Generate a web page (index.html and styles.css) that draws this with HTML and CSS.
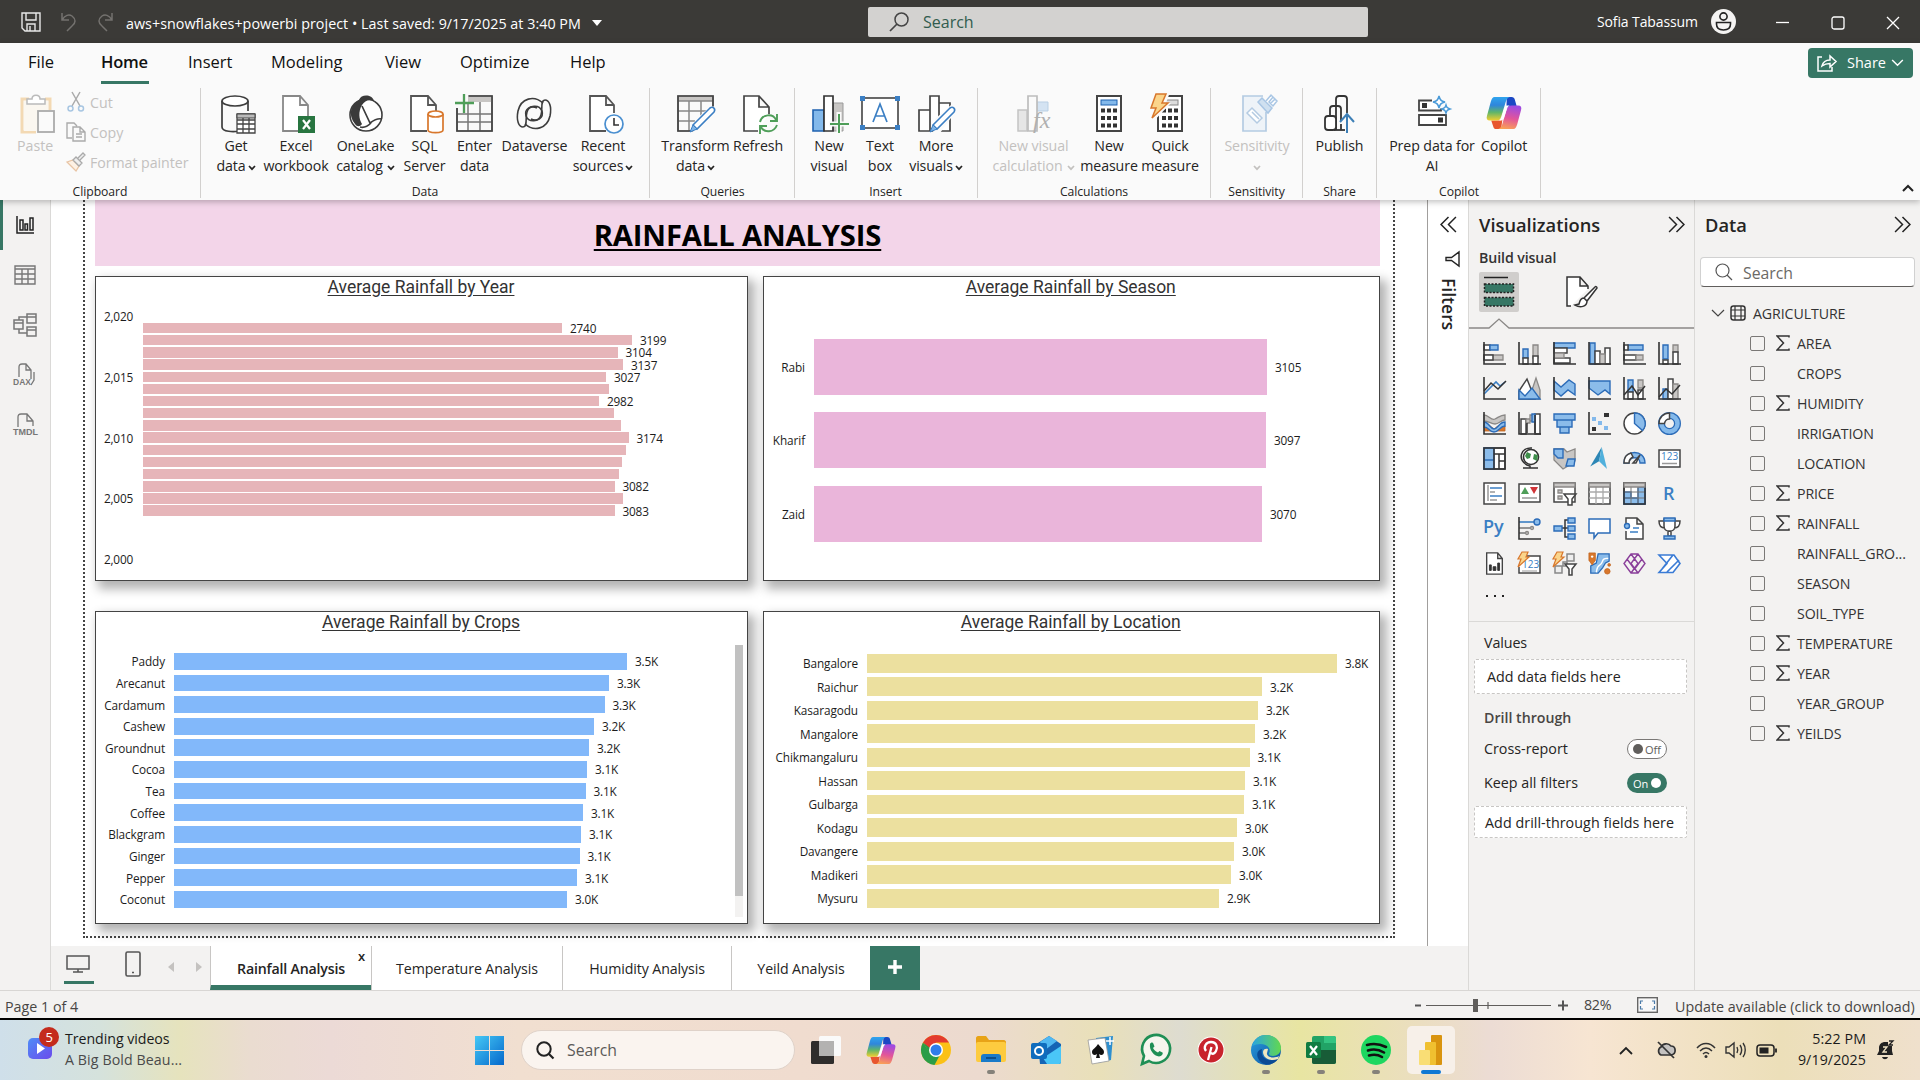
FILE: index.html
```html
<!DOCTYPE html>
<html lang="en">
<head>
<meta charset="utf-8">
<title>aws+snowflakes+powerbi project</title>
<link rel="stylesheet" href="styles.css">
</head>
<body>
<svg class="defs" width="0" height="0">
  <defs>
    <linearGradient id="cpA" x1="0" y1="0" x2="0" y2="1"><stop offset="0" stop-color="#2fa4ee"/><stop offset=".35" stop-color="#2f86dc"/><stop offset=".65" stop-color="#5fb56a"/><stop offset="1" stop-color="#f3cf2e"/></linearGradient>
    <linearGradient id="cpB" x1=".4" y1="0" x2=".2" y2="1"><stop offset="0" stop-color="#a04be0"/><stop offset=".5" stop-color="#e2559a"/><stop offset="1" stop-color="#fba552"/></linearGradient>
    <linearGradient id="win" x1="0" y1="0" x2="1" y2="1"><stop offset="0" stop-color="#45c8f5"/><stop offset="1" stop-color="#0568cc"/></linearGradient>
    <linearGradient id="edge" x1="0" y1="0" x2="1" y2="1"><stop offset="0" stop-color="#2a9fe0"/><stop offset="1" stop-color="#0c4f9e"/></linearGradient>
    <linearGradient id="edge2" x1="0" y1="0" x2="1" y2="0"><stop offset="0" stop-color="#2aa5e0"/><stop offset="1" stop-color="#62d84f"/></linearGradient>
    <linearGradient id="vid" x1="0" y1="0" x2="1" y2="1"><stop offset="0" stop-color="#4f8df7"/><stop offset="1" stop-color="#6b4bec"/></linearGradient>
    <symbol id="copilot" viewBox="0 0 38 36">
      <path d="M22 1h5c2 0 3 1 3.500 3l2 7h-7c-2 0-3 1-4 3z" fill="#1b48c4"/>
      <path d="M16 35h-5c-2 0-3-1-3.500-3l-2-6h8c2 0 3-1 4-3z" fill="#e8562f"/>
      <path d="M9 1h16c-3 1-4 4-5 8l-4 13c-1 3-2 4-5 4H4c-3 0-4-2-3-5L5 6c1-3 2-5 4-5z" fill="url(#cpA)"/>
      <path d="M29 35H13c3-1 4-4 5-8l4-13c1-3 2-4 5-4h7c3 0 4 2 3 5l-4 15c-1 3-2 5-4 5z" fill="url(#cpB)"/>
      <path d="M22 10h3c-2 1-3 3-3.500 5L19 23c-1 2-2 3-4 3h-1c2-1 2.500-3 3-5l2-7c.8-2.500 1.500-4 3-4z" fill="#fff"/>
    </symbol>
    <symbol id="sigma" viewBox="0 0 14 16"><path d="M13 2.500V1H1l6.500 7L1 15h12v-1.500" fill="none" stroke="#333" stroke-width="1.500"/></symbol>
    <symbol id="chev" viewBox="0 0 8 6"><path d="M1 1l3 3.200L7 1" fill="none" stroke="currentColor" stroke-width="1.700"/></symbol>
    <symbol id="dbl" viewBox="0 0 16 16"><path d="M1 1l7 7-7 7M8 1l7 7-7 7" fill="none" stroke="#222" stroke-width="1.400"/></symbol>
  </defs>
</svg>

<div class="app">
  <header class="titlebar">
    <svg class="save" viewBox="0 0 20 20" width="20" height="20"><path d="M1 1h18v18H4l-3-3zM5 1v7h10V1M6 19v-7h8v7M9 14v5" fill="none" stroke="#e8e8e8" stroke-width="1.400"/></svg>
    <svg class="undo" viewBox="0 0 18 20" width="18" height="20"><path d="M2 1v7h7M2 8c3-5 7-6 10-4 4 3 4 7 0 10l-5 5" fill="none" stroke="#74726f" stroke-width="1.500"/></svg>
    <svg class="redo" viewBox="0 0 18 20" width="18" height="20"><path d="M16 1v7H9M16 8c-3-5-7-6-10-4-4 3-4 7 0 10l5 5" fill="none" stroke="#74726f" stroke-width="1.500"/></svg>
    <span class="filename">aws+snowflakes+powerbi project • Last saved: 9/17/2025 at 3:40 PM</span>
    <svg class="fcaret" viewBox="0 0 10 6" width="10" height="6"><path d="M0 0h10L5 6z" fill="#fff"/></svg>
    <div class="topsearch">
      <svg viewBox="0 0 20 20" width="20" height="20"><circle cx="12.500" cy="7.500" r="6.500" fill="none" stroke="#444" stroke-width="1.500"/><path d="M8 12l-7 7" stroke="#444" stroke-width="1.700"/></svg>
      <span>Search</span>
    </div>
    <span class="user">Sofia Tabassum</span>
    <svg class="avatar" viewBox="0 0 25 25" width="25" height="25"><circle cx="12.500" cy="12.500" r="12.500" fill="#f4f3f2"/><circle cx="12.500" cy="7.500" r="3.600" fill="none" stroke="#222" stroke-width="1.600"/><path d="M5.500 13.500h14v1.500c0 4-3 6-7 6s-7-2-7-6z" fill="none" stroke="#222" stroke-width="1.600"/></svg>
    <svg class="wmin" viewBox="0 0 14 14" width="14" height="14"><path d="M0 6.500h13" stroke="#fff" stroke-width="1.300"/></svg>
    <svg class="wmax" viewBox="0 0 14 14" width="14" height="14"><rect x="1" y="1" width="12" height="12" rx="2" fill="none" stroke="#fff" stroke-width="1.300"/></svg>
    <svg class="wcls" viewBox="0 0 14 14" width="14" height="14"><path d="M1 1l12 12M13 1L1 13" stroke="#fff" stroke-width="1.300"/></svg>
  </header>

  <section class="ribbon">
    <nav class="menu">
      <a class="m1">File</a><a class="m2 on">Home</a><a class="m3">Insert</a><a class="m4">Modeling</a><a class="m5">View</a><a class="m6">Optimize</a><a class="m7">Help</a>
      <button class="share"><svg viewBox="0 0 20 18" width="20" height="18"><path d="M5 3H1v14h14v-4M5 12c1-4 4-6 8-6V2l6 5.500-6 5.500V9.500c-4 0-6 1-8 2.500z" fill="none" stroke="#fff" stroke-width="1.500"/></svg><span>Share</span><svg viewBox="0 0 14 9" width="13" height="8"><path d="M1 1l6 6 6-6" fill="none" stroke="#fff" stroke-width="1.600"/></svg></button>
    </nav>
    <div class="groups">
      <div class="group g1">
        <div class="clip">
          <div class="paste dim"><svg viewBox="0 0 36 40" width="36" height="40"><path d="M9 5H2v33h14M25 5h5v11" fill="none" stroke="#f3d9b3" stroke-width="3"/><rect x="4" y="7" width="24" height="30" fill="#fbf7f0"/><path d="M7 10V5h5c0-5 8-5 8 0h5v5z" fill="#fff" stroke="#bbb" stroke-width="1.500"/><rect x="18" y="17" width="16" height="21" fill="#fafafa" stroke="#aaa" stroke-width="1.800"/></svg><span>Paste</span></div>
          <div class="clipcol dim">
            <div><svg viewBox="0 0 20 20" width="20" height="20"><path d="M6 0l8 14M14 0L6 14" stroke="#aaa" stroke-width="1.500"/><circle cx="4.500" cy="16.500" r="2.500" fill="none" stroke="#a8c6e2" stroke-width="1.500"/><circle cx="15" cy="16.500" r="2.500" fill="none" stroke="#a8c6e2" stroke-width="1.500"/></svg><span>Cut</span></div>
            <div><svg viewBox="0 0 20 20" width="20" height="20"><path d="M6 16H1V1h7l3 3M7 5h7l5 5v9H7zM14 5v5h5M10 12h6M10 15h6" fill="none" stroke="#aaa" stroke-width="1.400"/></svg><span>Copy</span></div>
            <div><svg viewBox="0 0 20 20" width="20" height="20"><path d="M1 10l6-2 6 6-3 5z" fill="#fdf1e4" stroke="#e8c4a4" stroke-width="1.300"/><path d="M7 8l3-3 6 6-3 3zM12 6l5-5 2 2-5 5" fill="#eee" stroke="#aaa" stroke-width="1.300"/></svg><span class="fp">Format painter</span></div>
          </div>
        </div>
        <div class="glabel">Clipboard</div>
      </div>

      <div class="group g2">
        <div class="btns">
          <div class="btn" style="width:50px"><svg class="ic s3" viewBox="0 0 40 40"><path d="M3 7v26c0 5 12 5 17 4M29 7v10" fill="none" stroke="#3d3d3d" stroke-width="1.700"/><ellipse cx="16" cy="7" rx="13" ry="5" fill="#fff" stroke="#3d3d3d" stroke-width="1.700"/><path d="M18 20h18v19H18zM18 26h18M18 30h18M18 35h18M24 23v16M30 23v16" fill="#fff" stroke="#444" stroke-width="1.300"/><path d="M18 20h18v4H18z" fill="#bbb" stroke="#444"/></svg><span>Get</span><span>data<svg class="cv"><use href="#chev"/></svg></span></div>
          <div class="btn" style="width:70px"><svg class="ic s3" viewBox="0 0 40 40"><path d="M20 37H4V2h17l8 9v11M21 2v9h8" fill="#fff" stroke="#888" stroke-width="1.800"/><rect x="19" y="22" width="17" height="17" fill="#287540"/><path d="M24 26l7 9M31 26l-7 9" stroke="#fff" stroke-width="2.200"/></svg><span>Excel</span><span>workbook</span></div>
          <div class="btn" style="width:69px"><svg class="ic" viewBox="0 0 40 40"><circle cx="20" cy="21" r="16" fill="#fff" stroke="#3d3d3d" stroke-width="1.600"/><path d="M13 6c2-6 13-6 15 1-6-2-9 0-12 4-4 7-3 14 0 19-2 3-5 3-7 0-7-9-5-18 4-24z" fill="#3a3a3a"/><path d="M16 12l8 17c4-3 8-5 12-4M14 33c4 1 8-1 11-4" fill="none" stroke="#3d3d3d" stroke-width="1.700"/></svg><span>OneLake</span><span>catalog<svg class="cv wide"><use href="#chev"/></svg></span></div>
          <div class="btn" style="width:49px"><svg class="ic s2" viewBox="0 0 40 40"><path d="M20 37H4V2h17l8 9v6M21 2v9h8" fill="#fff" stroke="#555" stroke-width="1.800"/><path d="M21 20v16c0 3.500 15 3.500 15 0V20" fill="#fff" stroke="#d8772c" stroke-width="1.700"/><ellipse cx="28.500" cy="20" rx="7.500" ry="3" fill="#fff" stroke="#d8772c" stroke-width="1.700"/></svg><span>SQL</span><span>Server</span></div>
          <div class="btn" style="width:51px"><svg class="ic sm" viewBox="0 0 40 40"><path d="M3 14v23h35V2H14M3 20h35M3 28h35M14 10v27M26 6v31" fill="none" stroke="#777" stroke-width="1.500"/><path d="M14 3h24v5H14z" fill="#c8c6c4"/><path d="M3 14v23h35V2H15" fill="none" stroke="#444" stroke-width="1.700"/><path d="M10 0v19M1 9h19" stroke="#4f9e59" stroke-width="2.300"/></svg><span>Enter</span><span>data</span></div>
          <div class="btn" style="width:69px"><svg class="ic sm" viewBox="0 0 40 40"><path id="swirl" d="M29 9C20 1 7 4 4 17 2 27 5 33 9 33c5 0 2-9 4-15 2-7 12-8 15-1 2 7-5 11-11 8" fill="none" stroke="#3d3d3d" stroke-width="1.600"/><use href="#swirl" transform="rotate(180 20 19.500)"/></svg><span>Dataverse</span></div>
          <div class="btn" style="width:68px"><svg class="ic s3" viewBox="0 0 40 40"><path d="M20 37H4V2h16l8 9v8M20 2v9h8" fill="#fff" stroke="#555" stroke-width="1.800"/><circle cx="28" cy="30" r="9" fill="#fff" stroke="#4a8fd0" stroke-width="1.700"/><path d="M28 24v7h5" fill="none" stroke="#333" stroke-width="1.600"/></svg><span>Recent</span><span>sources<svg class="cv"><use href="#chev"/></svg></span></div>
        </div>
        <div class="glabel">Data</div>
      </div>

      <div class="group g3">
        <div class="btns">
          <div class="btn" style="width:69px"><svg class="ic s1" viewBox="0 0 40 40"><path d="M1 2h35v5H1z" fill="#c8c6c4"/><path d="M1 2h35v35H1zM1 7h35M1 17h35M1 27h35M12 7v30M24 7v30" fill="none" stroke="#888" stroke-width="1.500"/><path d="M14 37H1V2h35v10" fill="none" stroke="#444" stroke-width="1.700"/><path d="M18 26l16-14 5 5v22H16z" fill="#fafafa"/><path d="M16 31l17-17c3-2 6 1 4 4L20 35z" fill="#fff" stroke="#3b7fc4" stroke-width="1.600"/><path d="M16 31l4 4-7 3z" fill="#7eb4e8" stroke="#3b7fc4"/></svg><span>Transform</span><span>data<svg class="cv"><use href="#chev"/></svg></span></div>
          <div class="btn" style="width:56px"><svg class="ic s2" viewBox="0 0 40 40"><path d="M18 37H4V2h15l10 11v7M19 2v11h10" fill="#fff" stroke="#444" stroke-width="1.700"/><path d="M20 28c2-8 13-9 16-2M37 20v7h-7M37 31c-3 8-13 8-16 2M20 40v-8h7" fill="none" stroke="#4f9e59" stroke-width="1.900"/></svg><span>Refresh</span></div>
        </div>
        <div class="glabel">Queries</div>
      </div>

      <div class="group g4">
        <div class="btns">
          <div class="btn" style="width:50px"><svg class="ic s2" viewBox="0 0 40 40"><path d="M2 16h11v21H2z" fill="#83b9eb" stroke="#1f62b0" stroke-width="1.600"/><path d="M22 9h10v28H22z" fill="#c8c6c4" stroke="#999"/><path d="M13 2h9v35h-9z" fill="#fff" stroke="#333" stroke-width="1.700"/><path d="M28 18v22M18 30h20" stroke="#fafafa" stroke-width="5"/><path d="M28 20v19M19 30h19" stroke="#4f9e59" stroke-width="2"/></svg><span>New</span><span>visual</span></div>
          <div class="btn" style="width:52px"><svg class="ic" viewBox="0 0 40 40"><rect x="2" y="4" width="36" height="30" fill="#fff" stroke="#444" stroke-width="1.600"/><path d="M0 2h5v5H0zM35 2h5v5h-5zM0 31h5v5H0zM35 31h5v5h-5z" fill="#3b7fc4"/><path d="M13 28l7-18 7 18M15.500 22h9" fill="none" stroke="#3b7fc4" stroke-width="1.700"/></svg><span>Text</span><span>box</span></div>
          <div class="btn" style="width:60px"><svg class="ic s1" viewBox="0 0 40 40"><path d="M2 16h11v21H2zM22 9h11v28H22zM13 2h9v35h-9z" fill="#fff" stroke="#444" stroke-width="1.700"/><path d="M18 25l16-14 5 6-16 22h-7z" fill="#fafafa"/><path d="M16 31l17-17c3-2 6 1 4 4L20 35z" fill="#fff" stroke="#3b7fc4" stroke-width="1.600"/><path d="M16 31l4 4-7 3z" fill="#7eb4e8" stroke="#3b7fc4"/></svg><span>More</span><span>visuals<svg class="cv"><use href="#chev"/></svg></span></div>
        </div>
        <div class="glabel">Insert</div>
      </div>

      <div class="group g5">
        <div class="btns">
          <div class="btn dim" style="width:91px"><svg class="ic" viewBox="0 0 40 40"><path d="M4 16h9v21H4z" fill="#e6e6e6" stroke="#c4c4c4" stroke-width="1.500"/><path d="M23 8h11v9H23z" fill="#d4e3f2" stroke="#b9cfe4"/><path d="M14 2h9v35h-9z" fill="#fafafa" stroke="#bdbdbd" stroke-width="1.700"/><text x="19" y="34" class="fx">fx</text></svg><span>New visual</span><span>calculation<svg class="cv wide"><use href="#chev"/></svg></span></div>
          <div class="btn" style="width:60px"><svg class="ic" viewBox="0 0 40 40"><rect x="8" y="2" width="24" height="35" fill="#fff" stroke="#444" stroke-width="2"/><rect x="12" y="6" width="16" height="5" fill="#83b9eb" stroke="#1f62b0"/><path d="M12 16.500h16M12 24h16M12 31.500h16" stroke="#333" stroke-width="4" stroke-dasharray="4 2"/></svg><span>New</span><span>measure</span></div>
          <div class="btn" style="width:62px"><svg class="ic" viewBox="0 0 40 40"><rect x="8" y="2" width="24" height="35" fill="#fff" stroke="#444" stroke-width="2"/><rect x="12" y="6" width="16" height="5" fill="#ddd" stroke="#888"/><path d="M12 16.500h16M12 24h16M12 31.500h16" stroke="#333" stroke-width="4" stroke-dasharray="4 2"/><path d="M5-2h15l-4 11h5L0 31l5-14H-1z" fill="#fafafa"/><path d="M6 0h10l-4 9h6L2 24l4-10H1z" fill="#fbd58b" stroke="#d8772c" stroke-width="1.500"/></svg><span>Quick</span><span>measure</span></div>
        </div>
        <div class="glabel">Calculations</div>
      </div>

      <div class="group g6">
        <div class="btns">
          <div class="btn dim" style="width:92px"><svg class="ic s2" viewBox="0 0 40 40"><path d="M27 18v19H4V2h20" fill="#eef3f8" stroke="#b4cbe2" stroke-width="1.700"/><path d="M8 19l5-5 10 10-5 5zM13 18l7 7" fill="#fff" stroke="#b4cbe2" stroke-width="1.500"/><path d="M19 8l4-4 10 10-4 5z" fill="#cfe0f0" stroke="#a9c6e4" stroke-width="1.500"/><path d="M27 7l5-6 4 4-5 5M34 3l4 4-4 5-4-4z" fill="#fff" stroke="#a9c6e4" stroke-width="1.500"/></svg><span>Sensitivity</span><span><svg class="cv alone"><use href="#chev"/></svg></span></div>
        </div>
        <div class="glabel">Sensitivity</div>
      </div>

      <div class="group g7">
        <div class="btns">
          <div class="btn" style="width:73px"><svg class="ic s2" viewBox="0 0 40 40"><path d="M14 36V5c0-2 1-3 3-3h5c2 0 3 1 3 3v14" fill="none" stroke="#333" stroke-width="1.800"/><path d="M14 12h-3c-2 0-3 1-3 3v7M14 12h2c2 0 3 1 3 3v12M19 30v6" fill="none" stroke="#333" stroke-width="1.800"/><rect x="3" y="22" width="11" height="14" rx="3" fill="#fff" stroke="#333" stroke-width="1.800"/><path d="M12 36h11" stroke="#333" stroke-width="1.800"/><path d="M25 39V20M18 28l7-8 7 8" fill="none" stroke="#3d7fb6" stroke-width="2"/></svg><span>Publish</span></div>
        </div>
        <div class="glabel">Share</div>
      </div>

      <div class="group g8">
        <div class="btns">
          <div class="btn" style="width:88px"><svg class="ic s1" viewBox="0 0 40 40"><path d="M19 6.500H6v10h22v-2M6 21h27v10H6z" fill="#fff" stroke="#444" stroke-width="1.800"/><path d="M9 9h5v5H9zM25 23.500h5v5h-5z" fill="#333"/><path d="M26 2c1 4 2 5 6 6-4 1-5 2-6 6-1-4-2-5-6-6 4-1 5-2 6-6zM33 11c.8 2.500 1 3 4 4-3 1-3.200 1.500-4 4-.8-2.500-1-3-4-4 3-1 3.200-1.500 4-4z" fill="#fff" stroke="#4a9ad8" stroke-width="1.500"/></svg><span>Prep data for</span><span>AI</span></div>
          <div class="btn" style="width:56px"><svg class="ic"><use href="#copilot" x="1" y="2" width="38" height="34"/></svg><span>Copilot</span></div>
        </div>
        <div class="glabel">Copilot</div>
      </div>
      <svg class="collapse" viewBox="0 0 12 8" width="12" height="8"><path d="M1 7l5-5 5 5" fill="none" stroke="#222" stroke-width="2"/></svg>
    </div>
  </section>

  <main class="work">
    <aside class="rail">
      <div class="ri on"><svg viewBox="0 0 20 20" width="20" height="20"><path d="M2 1v17h17M5 5h3v10H5zM10 9h2.500v6H10zM15 3h3v12h-3z" fill="none" stroke="#222" stroke-width="1.500"/></svg></div>
      <div class="ri"><svg viewBox="0 0 22 20" width="22" height="20"><path d="M1 1h20v18H1zM1 4h20M1 9h20M1 14h20M8 4v15M14 4v15" fill="none" stroke="#777" stroke-width="1.400"/></svg></div>
      <div class="ri"><svg viewBox="0 0 24 24" width="24" height="24"><path d="M1 7h9v9H1zM1 10h9M14 1h9v9h-9zM14 4h9M14 14h9v9h-9zM14 17h9M6 7V4h8M6 16v4h8" fill="none" stroke="#777" stroke-width="1.500"/></svg></div>
      <div class="ri"><svg viewBox="0 0 24 24" width="24" height="24"><path d="M6 14V4c0-2 1-3 3-3h4l5 6v9M13 1v6h5M21 9v8l-3 5" fill="none" stroke="#777" stroke-width="1.300"/><text x="0" y="22" class="mini">DAX</text></svg></div>
      <div class="ri"><svg viewBox="0 0 24 24" width="24" height="24"><path d="M5 14V4c0-2 1-3 3-3h6l6 7v5M14 1v7h6" fill="none" stroke="#777" stroke-width="1.300"/><text x="0" y="22" class="mini t">TMDL</text></svg></div>
    </aside>

    <div class="center">
      <div class="stage">
        <div class="canvas">
          <div class="page">
            <div class="banner"><h1>RAINFALL ANALYSIS</h1></div>
            <div class="cards">
              <section class="card year">
                <h2>Average Rainfall by Year</h2>
                <div class="plot">
                  <div class="axis"><span>2,020</span><span>2,015</span><span>2,010</span><span>2,005</span><span>2,000</span></div>
                  <div class="bars">
                    <div><i style="width:419.5px"></i>2740</div><div><i style="width:489.5px"></i>3199</div><div><i style="width:475px"></i>3104</div><div><i style="width:480.5px"></i>3137</div><div><i style="width:463.5px"></i>3027</div><div><i style="width:466px"></i></div><div><i style="width:456.5px"></i>2982</div><div><i style="width:471.5px"></i></div><div><i style="width:478px"></i></div><div><i style="width:486px"></i>3174</div><div><i style="width:483.5px"></i></div><div><i style="width:479px"></i></div><div><i style="width:476px"></i></div><div><i style="width:472px"></i>3082</div><div><i style="width:480.5px"></i></div><div><i style="width:472px"></i>3083</div>
                  </div>
                </div>
              </section>
              <section class="card season">
                <h2>Average Rainfall by Season</h2>
                <div class="rows">
                  <div><b>Rabi</b><i style="width:453px"></i><em>3105</em></div>
                  <div><b>Kharif</b><i style="width:452px"></i><em>3097</em></div>
                  <div><b>Zaid</b><i style="width:448px"></i><em>3070</em></div>
                </div>
              </section>
              <section class="card crops">
                <h2>Average Rainfall by Crops</h2>
                <div class="rows">
                  <div><b>Paddy</b><i style="width:453px"></i><em>3.5K</em></div>
                  <div><b>Arecanut</b><i style="width:435px"></i><em>3.3K</em></div>
                  <div><b>Cardamum</b><i style="width:430.5px"></i><em>3.3K</em></div>
                  <div><b>Cashew</b><i style="width:420px"></i><em>3.2K</em></div>
                  <div><b>Groundnut</b><i style="width:415px"></i><em>3.2K</em></div>
                  <div><b>Cocoa</b><i style="width:413px"></i><em>3.1K</em></div>
                  <div><b>Tea</b><i style="width:411.5px"></i><em>3.1K</em></div>
                  <div><b>Coffee</b><i style="width:409px"></i><em>3.1K</em></div>
                  <div><b>Blackgram</b><i style="width:407px"></i><em>3.1K</em></div>
                  <div><b>Ginger</b><i style="width:405.5px"></i><em>3.1K</em></div>
                  <div><b>Pepper</b><i style="width:403px"></i><em>3.1K</em></div>
                  <div><b>Coconut</b><i style="width:393px"></i><em>3.0K</em></div>
                </div>
                <div class="scroll"><div></div></div>
              </section>
              <section class="card location">
                <h2>Average Rainfall by Location</h2>
                <div class="rows">
                  <div><b>Bangalore</b><i style="width:470px"></i><em>3.8K</em></div>
                  <div><b>Raichur</b><i style="width:395px"></i><em>3.2K</em></div>
                  <div><b>Kasaragodu</b><i style="width:391px"></i><em>3.2K</em></div>
                  <div><b>Mangalore</b><i style="width:388px"></i><em>3.2K</em></div>
                  <div><b>Chikmangaluru</b><i style="width:382.5px"></i><em>3.1K</em></div>
                  <div><b>Hassan</b><i style="width:378px"></i><em>3.1K</em></div>
                  <div><b>Gulbarga</b><i style="width:377px"></i><em>3.1K</em></div>
                  <div><b>Kodagu</b><i style="width:370px"></i><em>3.0K</em></div>
                  <div><b>Davangere</b><i style="width:367px"></i><em>3.0K</em></div>
                  <div><b>Madikeri</b><i style="width:364px"></i><em>3.0K</em></div>
                  <div><b>Mysuru</b><i style="width:352px"></i><em>2.9K</em></div>
                </div>
              </section>
            </div>
          </div>
        </div>
        <aside class="filters">
          <svg class="flip" width="17" height="17"><use href="#dbl"/></svg>
          <svg class="funnel" viewBox="0 0 16 16" width="16" height="16"><path d="M15 1v14L7.500 9.500H2v-3h5.500z" fill="none" stroke="#222" stroke-width="1.400"/></svg>
          <span>Filters</span>
        </aside>
      </div>
      <div class="tabs">
        <div class="views">
          <div class="dev"><svg viewBox="0 0 24 18" width="24" height="18"><path d="M1 1h22v13H1zM12 14v3M7 17h10" fill="none" stroke="#555" stroke-width="1.500"/></svg></div>
          <svg class="phone" viewBox="0 0 16 26" width="16" height="26"><rect x="1" y="1" width="14" height="24" rx="1.500" fill="none" stroke="#555" stroke-width="1.600"/><path d="M7 21.500h2" stroke="#555" stroke-width="1.500"/></svg>
          <svg class="pl" viewBox="0 0 6 10" width="6" height="10"><path d="M6 0v10L0 5z" fill="#c4c2c0"/></svg>
          <svg class="pr" viewBox="0 0 6 10" width="6" height="10"><path d="M0 0v10l6-5z" fill="#c4c2c0"/></svg>
        </div>
        <div class="tab on" style="width:161px"><span>Rainfall Analysis</span><small>x</small></div>
        <div class="tab" style="width:191px"><span>Temperature Analysis</span></div>
        <div class="tab" style="width:169px"><span>Humidity Analysis</span></div>
        <div class="tab" style="width:139px"><span>Yeild Analysis</span></div>
        <div class="add"><svg viewBox="0 0 14 14" width="14" height="14"><path d="M7 0v14M0 7h14" stroke="#fff" stroke-width="3.400"/></svg></div>
      </div>
    </div>

    <aside class="viz">
      <header><h3>Visualizations</h3><svg width="17" height="17"><use href="#dbl"/></svg></header>
      <h4>Build visual</h4>
      <div class="modes">
        <div class="mode on"><svg viewBox="0 0 40 40" width="40" height="40"><path d="M5 5.500h24" stroke="#222" stroke-width="1.500"/><path d="M5.500 12h29v8.500h-29zM5.500 25.500h29V34h-29z" fill="#377765" stroke="#222" stroke-width="1.500" stroke-dasharray="2 1.500"/></svg></div>
        <div class="mode fmt"><svg viewBox="0 0 32 32" width="32" height="32"><path d="M5 30H1V1h13l8 9v3M14 1v9h8" fill="#fff" stroke="#333" stroke-width="1.500"/><path d="M29 11L18 22l3 3 10-13c0-1-1-2-2-1zM18 22c-4 0-4 3-5 6l-4 1c5 3 12 2 12-4" fill="#fff" stroke="#333" stroke-width="1.500"/></svg></div>
      </div>
      <svg class="notch" viewBox="0 0 225 11" width="225" height="11"><path d="M0 10h20l10-9 10 9h185" fill="none" stroke="#8a8886" stroke-width="1.300"/></svg>
      <div class="vgrid">
        <svg viewBox="0 0 23 23"><path class="gy" d="M1 13h19v5H1z"/><path class="wh" d="M1 13h9v5H1zM1 3h6v5H1z"/><path class="bl" d="M7 3h8v5H7z"/><path class="ax" d="M1 0v22h22"/></svg>
        <svg viewBox="0 0 23 23"><path class="gy" d="M15 3h5v13h-5z"/><path class="bl" d="M5 7h5v9H5z"/><path class="wh" d="M5 16h5v6H5zM15 14h5v8h-5z"/><path class="ax" d="M1 0v22h22"/></svg>
        <svg viewBox="0 0 23 23"><path class="bl" d="M1 1h21v5H1z"/><path class="wh" d="M1 6h13v5H1zM1 16h16v5H1z"/><path class="gy" d="M1 11h10v5H1z"/><path class="ax" d="M1 0v22h22"/></svg>
        <svg viewBox="0 0 23 23"><path class="bl" d="M2 1h5v21H2z"/><path class="wh" d="M7 9h5v13H7zM17 6h5v16h-5z"/><path class="gy" d="M12 12h5v10h-5z"/><path class="ax" d="M1 0v22h22"/></svg>
        <svg viewBox="0 0 23 23"><path class="bl" d="M5 3h15v5H5z"/><path class="wh" d="M1 3h4v5H1zM1 13h12v5H1z"/><path class="gy" d="M13 13h7v5h-7z"/><path class="ax" d="M1 0v22h22"/></svg>
        <svg viewBox="0 0 23 23"><path class="bl" d="M5 3h5v14H5z"/><path class="gy" d="M15 3h5v7h-5z"/><path class="wh" d="M5 18h5v4H5zM15 10h5v12h-5z"/><path class="ax" d="M1 0v22h22"/></svg>

        <svg viewBox="0 0 23 23"><path class="lb" d="M1 17L13 5l4 4 5-4"/><path class="ln" d="M1 14l7-8 7 6 8-8"/><path class="ax" d="M1 0v22h22"/></svg>
        <svg viewBox="0 0 23 23"><path class="gy" d="M11 22L18 1l4 12v9z"/><path class="wh" d="M1 14l8-12 8 20H1z"/><path class="bl" d="M1 13l6 6 7-8 8 11H1z"/></svg>
        <svg viewBox="0 0 23 23"><path class="bl" d="M1 4l7 6 8-7 6 4v11l-7-5-7 6-7-6z"/><path class="ax" d="M1 0v22h22"/></svg>
        <svg viewBox="0 0 23 23"><path class="bl" d="M1 4h21v13l-5-4-7 5-9-7z"/><path class="ax" d="M1 0v22h22"/></svg>
        <svg viewBox="0 0 23 23"><path class="bl" d="M5 3h5v12H5z"/><path class="gy" d="M15 3h5v8h-5z"/><path class="wh" d="M5 15h5v7H5zM15 13h5v9h-5z"/><path class="ln" d="M1 18l8-9 6 9 7-9"/><path class="ax" d="M1 0v22h22"/></svg>
        <svg viewBox="0 0 23 23"><path class="bl" d="M5 12h5v10H5z"/><path class="wh" d="M10 2h5v20h-5z"/><path class="gy" d="M15 7h5v15h-5z"/><path class="ln" d="M1 20l7-8 6 5 8-9"/><path class="ax" d="M1 0v22h22"/></svg>

        <svg viewBox="0 0 23 23"><path class="gy" d="M1 3c5 0 7 6 11 4s6-4 10-4v5c-4 0-6 4-10 4S6 9 1 9z"/><path class="or" d="M1 13h5l5 4 4-3h7v5H1z"/><path class="bl" d="M1 10c5 0 6 7 10 7s5-7 11-7v4c-5 0-6 6-11 6S6 15 1 15z"/><path class="ax" d="M1 0v22h22"/></svg>
        <svg viewBox="0 0 23 23"><path class="wh" d="M3 7h5v15H3zM17 2h5v20h-5z"/><path class="gy" d="M8 7h4v4H8zM12 3h3v6h-3z"/><path class="bl" d="M14 2h3v8h-3z"/><path class="ln" d="M9 11v10M17 3v18"/><path class="ax" d="M1 0v22h22"/></svg>
        <svg viewBox="0 0 23 23"><path class="bl" d="M1 2h21v6H1zM4 8h15v7H4zM7 15h9v6H7z"/></svg>
        <svg viewBox="0 0 23 23"><path d="M4 5h4v4H4zM10 9h4v4h-4zM16 14h4v4h-4z" fill="#83b9eb"/><path d="M16 1h5v4h-5zM4 15h4v4H4z" fill="#333"/><path class="ax" d="M1 0v22h22"/></svg>
        <svg viewBox="0 0 23 23"><circle class="wh" cx="11.500" cy="11.500" r="10.500"/><path class="bl" d="M11.500 1a10.500 10.500 0 018 17.500l-8-7z"/></svg>
        <svg viewBox="0 0 23 23"><circle cx="11.500" cy="11.500" r="8" fill="none" stroke="#2c6cb8" stroke-width="7"/><circle cx="11.500" cy="11.500" r="8" fill="none" stroke="#83b9eb" stroke-width="4.500"/><path d="M11.500 1v6a5 5 0 00-5 4.500H1A10.500 10.500 0 0111.500 1z" class="wh"/></svg>

        <svg viewBox="0 0 23 23"><path class="wh" d="M1 1h21v21H1z"/><path class="bl" d="M1 1h10v12H1zM1 13h10v9H1z"/><path class="ln" d="M11 7h11M11 1v21M16 7v15M16 14h6M1 1h21v21H1z"/></svg>
        <svg viewBox="0 0 23 23"><circle cx="13" cy="10" r="7.500" fill="#fff" stroke="#333" stroke-width="1.600"/><path d="M9 5l4 2-1 4-3 1-2-3zM16 7l4 1-1 6-4-2z" fill="#3f8f4b"/><path class="ln" d="M14 1C3 0-1 12 9 18l3 1v2M5 21h15"/></svg>
        <svg viewBox="0 0 23 23"><path class="gy" d="M1 2h10l3 3 8-3v12l-7 5-5 3-9-9z"/><path class="bl" d="M1 2h9v9H5l-4-4zM15 12h7l-1 7h-8z"/></svg>
        <svg viewBox="0 0 23 26"><path d="M14 0L1 22l10-6z" fill="#2c86b5"/><path d="M14 0l6 25-9-9z" fill="#50b0dc"/></svg>
        <svg viewBox="0 0 23 23"><path class="bl" d="M1 16C1 2 22 2 22 16h-5c0-7-11-7-11 0z"/><path class="wh" d="M1 16c0-6 3-9 7-10l2 4c-2 1-4 3-4 6zM10 16l7-8-4 8z"/></svg>
        <svg viewBox="0 0 23 23"><path class="wh" d="M1 3h21v17H1z"/><text x="3" y="13" class="num">123</text><path d="M4 16.500h15" stroke="#999" stroke-width="1.500"/></svg>

        <svg viewBox="0 0 23 23"><path class="wh" d="M1 1h21v21H1z"/><path class="lb" d="M7 6h12M7 14h12"/><path d="M5 3v16M7 10h5M7 18h7" stroke="#999" stroke-width="1.500"/></svg>
        <svg viewBox="0 0 23 23"><path class="wh" d="M1 2h21v18H1z"/><path d="M3 12l4-7 4 7z" fill="#4f9e59"/><path d="M12 5h8l-4 7z" fill="#d13438"/><path d="M4 16h15" stroke="#999" stroke-width="1.500"/></svg>
        <svg viewBox="0 0 23 23"><path class="wh" d="M1 1h21v19H1z"/><path class="gy" d="M1 1h21v4H1zM5 8h4v3H5zM5 14h4v3H5z"/><path d="M11 12h12l-4 5v6h-4v-6z" class="wh"/></svg>
        <svg viewBox="0 0 23 23"><path class="wh" d="M1 1h21v21H1z"/><path d="M1 10h21M1 16h21M8 4v18M15 4v18" stroke="#aaa" stroke-width="1.300"/><path class="gy" d="M1 1h21v4H1z"/></svg>
        <svg viewBox="0 0 23 23"><path class="wh" d="M1 1h21v21H1z"/><path class="bl" d="M1 16h14v6H1zM15 5h7v17h-7zM1 10h7v6H1z"/><path d="M1 10h21M1 16h21M8 5v17M15 5v17" stroke="#777"/><path class="ln" d="M1 1h21v21H1z"/><path class="gy" d="M1 1h21v4H1z"/></svg>
        <svg viewBox="0 0 23 23"><text x="5" y="18" class="let">R</text></svg>

        <svg viewBox="0 0 23 23"><text x="0" y="16" class="let">Py</text></svg>
        <svg viewBox="0 0 23 23"><path class="lb" d="M1 5h15"/><circle class="bl" cx="19" cy="5" r="3"/><path d="M1 11h11M1 16h6" stroke="#777" stroke-width="1.500"/><circle cx="14" cy="11" r="1.500" class="gy"/><circle cx="9" cy="16" r="1.500" class="gy"/><path class="ax" d="M1 0v22h22"/></svg>
        <svg viewBox="0 0 23 23"><path class="ln" d="M8 11h8M15 3h-3v17h3"/><path class="bl" d="M1 9h8v5H1zM15 1h7v5h-7zM15 9h7v5h-7zM15 17h7v5h-7z"/></svg>
        <svg viewBox="0 0 23 23"><path d="M1 2h21v14H10l-4 5v-5H1z" fill="#fff" stroke="#2c6cb8" stroke-width="1.500"/></svg>
        <svg viewBox="0 0 23 23"><path class="wh" d="M3 8V1h11l6 6v15H3v-8M14 1v6h6"/><circle class="bl" cx="4" cy="9" r="2.500"/><path class="lb" d="M10 11h6M7 15h8"/></svg>
        <svg viewBox="0 0 23 23"><path class="wh" d="M6 2h11v7c0 7-11 7-11 0zM6 4H1c0 5 2 7 6 7M17 4h5c0 5-2 7-6 7M10 14h3v5h-3z"/><path class="bl" d="M6 1h11v3H6zM6 19h11v3H6z"/></svg>

        <svg viewBox="0 0 23 25"><path class="wh" d="M3 1h12l5 6v17H3zM15 1v6h5"/><path d="M6 14h2v6H6zM10 16h3v4h-3zM15 12h2v8h-2z" fill="#333" stroke="#333"/></svg>
        <svg viewBox="0 0 23 23"><path class="wh" d="M9 4h13v17H1v-6"/><text x="4" y="16" class="num">123</text><path d="M4 19h15" stroke="#999"/><path class="fl" d="M4 0h6L8 5h3L0 15l3-8H0z"/></svg>
        <svg viewBox="0 0 23 23"><path d="M14 2h7v7h-7zM2 14h7v7H2zM10 10h4v4h-4z" fill="#eee" stroke="#888" stroke-width="1.500"/><path class="wh" d="M12 12h11l-4 5v6h-3v-6z"/><path class="fl" d="M4 0h6L8 5h3L0 15l3-8H0z"/></svg>
        <svg viewBox="0 0 23 25"><path class="bl" d="M10 2h12v8l-4 2-3 5-5 6H2V15l6-3z"/><path d="M21 7c-8-1-5 5-9 7-4 2-3 5-4 8" stroke="#fff" stroke-width="1.500" fill="none"/><path d="M0 1h7v8l-3.500 5L0 9z" class="or"/><circle cx="3.500" cy="5" r="1.300" fill="#fff"/><circle cx="20" cy="21" r="3" class="or"/><circle cx="22" cy="14" r="1.500" class="or"/></svg>
        <svg viewBox="0 0 23 23"><path d="M8 2h7l7 9.500L15 21H8L1 11.500zM8 2l7 9.500L8 21M15 2l-7 9.500 7 9.500M4 7l7 9.500M19 7l-7 9.500" fill="none" stroke="#8a3f9a" stroke-width="1.400"/></svg>
        <svg viewBox="0 0 23 23"><path d="M1 3h15l6 8.500-7 9H1l8-9zM9 20L21 8M4 17L15 3" fill="#fff" stroke="#3a7bd5" stroke-width="1.600"/></svg>
      </div>
      <div class="dots"><i></i><i></i><i></i></div>
      <div class="wells">
        <label>Values</label>
        <div class="well">Add data fields here</div>
        <h5>Drill through</h5>
        <div class="opt o1"><span>Cross-report</span><div class="tog off"><i></i><span>Off</span></div></div>
        <div class="opt o2"><span>Keep all filters</span><div class="tog onn"><span>On</span><i></i></div></div>
        <div class="well w2">Add drill-through fields here</div>
      </div>
    </aside>

    <aside class="data">
      <header><h3>Data</h3><svg width="17" height="17"><use href="#dbl"/></svg></header>
      <div class="dsearch"><svg viewBox="0 0 18 18" width="18" height="18"><circle cx="7.500" cy="7.500" r="6.500" fill="none" stroke="#555" stroke-width="1.200"/><path d="M12 12l5 5" stroke="#555" stroke-width="1.300"/></svg><span>Search</span></div>
      <div class="table"><svg viewBox="0 0 14 8" width="14" height="8"><path d="M1 1l6 6 6-6" fill="none" stroke="#444" stroke-width="1.200"/></svg><svg class="ti" viewBox="0 0 16 16" width="16" height="16"><rect x="1" y="1" width="14" height="14" rx="2.500" fill="none" stroke="#333" stroke-width="1.500"/><path d="M1 5h14M1 11h14M5 1v14M11 1v14" stroke="#333" stroke-width="1.200"/></svg><span>AGRICULTURE</span></div>
      <ul>
        <li><i></i><svg><use href="#sigma"/></svg>AREA</li>
        <li><i></i><svg></svg>CROPS</li>
        <li><i></i><svg><use href="#sigma"/></svg>HUMIDITY</li>
        <li><i></i><svg></svg>IRRIGATION</li>
        <li><i></i><svg></svg>LOCATION</li>
        <li><i></i><svg><use href="#sigma"/></svg>PRICE</li>
        <li><i></i><svg><use href="#sigma"/></svg>RAINFALL</li>
        <li><i></i><svg></svg>RAINFALL_GRO...</li>
        <li><i></i><svg></svg>SEASON</li>
        <li><i></i><svg></svg>SOIL_TYPE</li>
        <li><i></i><svg><use href="#sigma"/></svg>TEMPERATURE</li>
        <li><i></i><svg><use href="#sigma"/></svg>YEAR</li>
        <li><i></i><svg></svg>YEAR_GROUP</li>
        <li><i></i><svg><use href="#sigma"/></svg>YEILDS</li>
      </ul>
    </aside>
  </main>

  <footer class="status">
    <span class="pg">Page 1 of 4</span>
    <svg class="zoom" viewBox="0 0 156 16" width="156" height="16"><path d="M2 8.500h6" stroke="#555" stroke-width="2"/><path d="M13 8.500h125M75 5v7" stroke="#605e5c" stroke-width="1.200"/><path d="M60 2h5v13h-5z" fill="#605e5c"/><path d="M145 8.500h10M150 3.500v10" stroke="#555" stroke-width="2"/></svg>
    <span class="pct">82%</span>
    <svg class="fit" viewBox="0 0 21 16" width="21" height="16"><rect x=".7" y=".7" width="19.600" height="14.600" fill="#f8f8f8" stroke="#666" stroke-width="1.400"/><path d="M6 4H3.500v3M3.500 9v3H6M15 4h2.500v3M17.500 9v3H15" fill="none" stroke="#4a7aa8" stroke-width="1.200"/></svg>
    <span class="upd">Update available (click to download)</span>
  </footer>

  <div class="taskbar">
    <div class="widget">
      <svg viewBox="0 0 36 36" width="36" height="36"><rect x="4" y="11" width="24" height="21" rx="5" fill="url(#vid)"/><path d="M13 16l8 5.500-8 5.500z" fill="#fff"/><circle cx="25" cy="10" r="10" fill="#c42b1c"/><text x="21.500" y="15" class="badge">5</text></svg>
      <div><span>Trending videos</span><span class="sub">A Big Bold Beau...</span></div>
    </div>
    <div class="apps">
      <svg class="start" viewBox="0 0 29 29" width="29" height="29"><path d="M0 0h14v14H0zM15 0h14v14H15zM0 15h14v14H0zM15 15h14v14H15z" fill="url(#win)"/></svg>
      <div class="tsearch"><svg viewBox="0 0 18 18" width="18" height="18"><circle cx="8" cy="8" r="6.700" fill="none" stroke="#222" stroke-width="2"/><path d="M12.500 12.500l5 5" stroke="#222" stroke-width="2.200"/></svg><span>Search</span></div>
      <div class="app-i"><svg viewBox="0 0 30 30" width="30" height="30"><rect y="6" width="23" height="23" rx="1.500" fill="#2f2d2c"/><rect x="8" y="1" width="22" height="20" rx="1.500" fill="#fafafa"/><rect x="8" y="6" width="15" height="15" fill="#b3b2b1"/></svg></div>
      <div class="app-i"><svg width="30" height="29"><use href="#copilot"/></svg></div>
      <div class="app-i"><svg viewBox="0 0 30 30" width="30" height="30"><circle cx="15" cy="15" r="15" fill="#fbc116"/><path d="M2 7.500A15 15 0 0013.500 30l6.500-12-5 3-6-3z" fill="#2a9d48"/><path d="M2 7.500L9 19l6-4z" fill="#2a9d48"/><path d="M2 7.500A15 15 0 0128 7.500H15L9 13z" fill="#e33b2e"/><circle cx="15" cy="15" r="7" fill="#fff"/><circle cx="15" cy="15" r="5.500" fill="#2f7de9"/></svg></div>
      <div class="app-i run"><svg viewBox="0 0 30 28" width="30" height="28"><path d="M0 2c0-1 1-2 2-2h8l3 4h15c1 0 2 1 2 2v3H0z" fill="#e8a317"/><rect y="6" width="30" height="20" rx="2" fill="#fdcb3f"/><path d="M5 26v-5c0-2 1-3 3-3h14c2 0 3 1 3 3v5z" fill="#1a7ac9"/><path d="M10 22h10" stroke="#0b4f8c" stroke-width="2"/></svg></div>
      <div class="app-i"><svg viewBox="0 0 30 28" width="30" height="28"><path d="M7 7L18 0l12 8v18c0 1-1 2-2 2H9z" fill="#1564b5"/><path d="M9 6l9-6 8 5-12 9z" fill="#4fb8f2"/><path d="M30 10L12 22l4 6h12c1 0 2-1 2-2z" fill="#4ac6f8"/><rect y="7" width="16" height="16" rx="2" fill="#0f6cbd"/><circle cx="8" cy="15" r="4" fill="none" stroke="#fff" stroke-width="2"/></svg></div>
      <div class="app-i"><svg viewBox="0 0 30 28" width="30" height="28"><path d="M10 2l17-2-2 24-13 3z" fill="#2d8fd0"/><path d="M2 4l17-2 4 23-17 3z" fill="#fff" stroke="#999" stroke-width=".8"/><path d="M12 8c3 4 6 5 6 8s-3 4-5 2l1 4h-4l1-4c-2 2-5 1-5-2s4-4 6-8z" fill="#111"/><path d="M24 1v8M20 5h8" stroke="#fff" stroke-width="1.500"/></svg></div>
      <div class="app-i"><svg viewBox="0 0 30 30" width="30" height="30"><path d="M1 29l2-8a14 14 0 115 5z" fill="#f6f6ee" stroke="#1f8f55" stroke-width="2.600"/><path d="M9 9c1-2 3-2 3.500 0l1 2.500L12 13c1 2 3 4 5 4.500l1.500-1.500 3 1.500c1 1-1 4-3.500 4C13 21 8 15 9 9z" fill="#1f8f55"/></svg></div>
      <div class="app-i"><svg viewBox="0 0 28 28" width="28" height="28"><circle cx="14" cy="14" r="13.500" fill="#fff"/><circle cx="14" cy="14" r="12.500" fill="#c8232c"/><path d="M11 24l3.500-13M9 15c-3-4 0-9 5-9 6 0 7 6 5 9-2 4-5 3-6 1" fill="none" stroke="#fff" stroke-width="2.300"/></svg></div>
      <div class="app-i run"><svg viewBox="0 0 30 30" width="30" height="30"><circle cx="15" cy="15" r="15" fill="url(#edge)"/><path d="M1 11C4 3 9 0 15 0c9 0 15 6 15 13 0 5-4 8-8 8-3 0-4-1-4-3 1-1 1-3 0-5-3-5-11-5-17-2z" fill="url(#edge2)"/><path d="M11 14c-2 8 5 14 16 10-5 7-16 8-20-1-2-5 0-8 4-9z" fill="#0b4a94"/><path d="M16 18c-1 4 7 6 12 3l-1 3c-8 3-15-1-15-7 0-3 3-4 5-3z" fill="#f0e7c0"/></svg></div>
      <div class="app-i run"><svg viewBox="0 0 30 28" width="30" height="28"><rect x="6" width="24" height="28" rx="2" fill="#21a366"/><path d="M18 0h10c1 0 2 1 2 2v5H18z" fill="#33c481"/><path d="M6 14h24v12c0 1-1 2-2 2H8c-1 0-2-1-2-2z" fill="#185c37"/><path d="M18 7h12v7H18z" fill="#21a366"/><rect y="6" width="15" height="16" rx="1.500" fill="#107c41"/><path d="M4 10l7 9M11 10l-7 9" stroke="#fff" stroke-width="2.200"/></svg></div>
      <div class="app-i run"><svg viewBox="0 0 30 30" width="30" height="30"><circle cx="15" cy="15" r="15" fill="#1ed760"/><path d="M6 10c7-2 13-1 19 2M7 15.500c6-2 11-1 16 2M8 20.500c5-1.500 9-1 13 1.500" fill="none" stroke="#111" stroke-width="2.600" stroke-linecap="round"/></svg></div>
      <div class="app-i active"><svg viewBox="0 0 24 30" width="24" height="30"><rect x="12" width="11" height="30" rx="1" fill="#d9940f"/><rect x="6" y="7" width="11" height="23" rx="1" fill="#f0c030"/><rect x="0" y="15" width="11" height="15" rx="1" fill="#f9de75"/></svg></div>
    </div>
    <div class="tray">
      <svg class="t1" viewBox="0 0 14 9" width="14" height="9"><path d="M1 8l6-6 6 6" fill="none" stroke="#222" stroke-width="1.800"/></svg>
      <svg class="t2" viewBox="0 0 22 18" width="22" height="18"><path d="M6 14a4.500 4.500 0 010-8 6 6 0 0110-1c5 0 6 8 0 9z" fill="#c4c2c0" stroke="#333" stroke-width="1.700"/><path d="M3 1l16 16" stroke="#333" stroke-width="1.700"/></svg>
      <svg class="t3" viewBox="0 0 20 16" width="20" height="16"><path d="M1 6c5-6 13-6 18 0M4 9c4-4 8-4 12 0M7 12c2-2 4-2 6 0" fill="none" stroke="#333" stroke-width="1.500"/><circle cx="10" cy="14.500" r="1.500" fill="#333"/></svg>
      <svg class="t4" viewBox="0 0 22 16" width="22" height="16"><path d="M1 5h3l5-4v14l-5-4H1zM12 5c1 2 1 4 0 6M15 3c2 3 2 7 0 10M18 1c3 4 3 10 0 14" fill="none" stroke="#333" stroke-width="1.400"/></svg>
      <svg class="t5" viewBox="0 0 21 13" width="21" height="13"><rect x="1" y="1" width="17" height="11" rx="3" fill="none" stroke="#222" stroke-width="1.500"/><rect x="3.500" y="3.500" width="9" height="6" fill="#222"/><path d="M20 4.500v4" stroke="#222" stroke-width="1.800"/></svg>
      <div class="clock"><span>5:22 PM</span><span>9/19/2025</span></div>
      <svg class="t6" viewBox="0 0 18 20" width="18" height="20"><path d="M1 15l2-4V8c0-4 3-6 6-6h3v4h4v5l1 4zM6 17h6c-1 3-5 3-6 0z" fill="#222"/><path d="M7 7h4l-4 5h4" fill="none" stroke="#efe2c4" stroke-width="1.300"/><path d="M13 1h4l-4 4h4" fill="none" stroke="#222" stroke-width="1.300"/></svg>
    </div>
  </div>
</div>
</body>
</html>
```
FILE: styles.css
```css
* { box-sizing: border-box; }
body { margin: 0; width: 1920px; height: 1080px; overflow: hidden; font-family: "Open Sans", "Noto Sans", sans-serif; color: #252423; font-size: 14px; }
svg { display: block; flex: none; overflow: visible; }
h1, h2, h3, h4, h5, ul { margin: 0; padding: 0; }
i, em { font-style: normal; }
.defs { position: absolute; }
.app { display: flex; flex-direction: column; height: 1080px; }

/* title bar */
.titlebar { height: 43px; background: #3b3a37; display: flex; align-items: center; color: #fff; flex: none; white-space: nowrap; }
.save { margin-left: 21px; }
.undo { margin-left: 19px; }
.redo { margin-left: 18px; }
.filename { margin-left: 12px; width: 457px; font-size: 14.300px; letter-spacing: .03px; padding-top: 4px; }
.fcaret { margin-left: 9px; margin-top: 3px; }
.topsearch { margin-left: 266px; width: 500px; height: 30px; background: #d3d2d0; border-radius: 2px; display: flex; align-items: center; padding-left: 21px; color: #315c4e; font-size: 16px; }
.topsearch span { margin-left: 14px; }
.user { margin-left: 229px; width: 102px; font-size: 14px; letter-spacing: -.12px; }
.avatar { margin-left: 12px; }
.wmin { margin-left: 40px; margin-top: 3px; }
.wmax { margin-left: 41px; margin-top: 3px; }
.wcls { margin-left: 41px; margin-top: 3px; }

/* ribbon */
.ribbon { height: 157px; background: #fafafa; flex: none; position: relative; z-index: 2; box-shadow: 0 2px 6px rgba(0,0,0,.25); display: flex; flex-direction: column; }
.menu { height: 45px; display: flex; align-items: center; font-size: 16.500px; color: #111; }
.menu a { height: 38px; line-height: 32px; white-space: nowrap; margin-top: -2px; }
.menu .m1 { margin-left: 28px; width: 73px; }
.menu .m2 { width: 48px; margin-right: 39px; font-weight: 600; letter-spacing: -.2px; border-bottom: 3px solid #377765; }
.menu .m3 { width: 83px; }
.menu .m4 { width: 114px; }
.menu .m5 { width: 75px; }
.menu .m6 { width: 110px; }
.menu .m7 { width: 60px; }
.share { margin-left: auto; margin-right: 7px; margin-top: -6px; width: 105px; height: 30px; border: 0; border-radius: 4px; background: #377765; color: #fff; font: 14.500px "Open Sans", sans-serif; display: flex; align-items: center; padding: 0 0 0 9px; }
.share span { margin: 0 5px 0 10px; }
.groups { flex: 1; display: flex; position: relative; }
.group { height: 110px; border-right: 1px solid #d2d0ce; display: flex; flex-direction: column; flex: none; }
.g1 { width: 201px; }
.g2 { width: 449px; padding-left: 10px; }
.g3 { width: 145px; padding-left: 11px; }
.g4 { width: 183px; padding-left: 9px; }
.g5 { width: 233px; padding-left: 10px; }
.g6 { width: 92px; }
.g7 { width: 74px; }
.g8 { width: 164px; padding-left: 11px; }
.btns { display: flex; height: 94px; }
.btn { flex: none; display: flex; flex-direction: column; align-items: center; padding-top: 6px; font-size: 14.200px; color: #252423; }
.btn span { white-space: nowrap; line-height: 20px; display: flex; align-items: center; justify-content: center; height: 20px; letter-spacing: -.1px; position: relative; top: -1px; }
.ic { width: 40px; height: 40px; margin-bottom: 3px; position: relative; }
.s1 { left: 1px; } .s2 { left: 2px; } .s3 { left: 3px; } .sm { left: -1px; }
.cv { width: 8px; height: 6px; margin-left: 2px; margin-top: 3px; }
.cv.wide { margin-left: 4px; }
.cv.alone { margin-left: -1px; }
.dim, .btn.dim { color: #c3c1bf; }
.fx { font: italic 24px "Liberation Serif", serif; fill: #b0b0b0; }
.glabel { font-size: 12.200px; text-align: center; line-height: 16px; padding-top: 2px; margin-bottom: -4px; letter-spacing: -.05px; }
.g2 .glabel, .g3 .glabel, .g4 .glabel, .g5 .glabel, .g8 .glabel { margin-left: -10px; }
.clip { display: flex; height: 94px; padding-left: 17px; font-size: 14.200px; }
.paste { width: 49px; padding-top: 6px; display: flex; flex-direction: column; align-items: flex-start; padding-left: 3px; }
.paste span { line-height: 20px; margin-top: 2px; margin-left: -3px; }
.clipcol { display: flex; flex-direction: column; margin-top: -1px; }
.clipcol > div { display: flex; align-items: center; height: 30px; gap: 4px; white-space: nowrap; }
.fp { letter-spacing: -.05px; }
.collapse { position: absolute; right: 6px; bottom: 8px; }

/* workspace */
.work { height: 790px; display: flex; flex: none; background: #f3f2f1; }
.rail { width: 51px; border-right: 1px solid #dad9d7; display: flex; flex-direction: column; flex: none; }
.ri { height: 50px; display: flex; align-items: center; justify-content: center; padding-bottom: 1px; }
.ri.on { border-left: 3px solid #377765; padding-right: 3px; }
.mini { font: bold 8.500px "Liberation Sans", sans-serif; fill: #777; }
.mini.t { font-size: 9px; }
.center { width: 1417px; flex: none; display: flex; flex-direction: column; }
.stage { height: 746px; display: flex; background: #fff; }
.canvas { width: 1376px; padding: 0 0 0 32px; flex: none; }
.page { width: 1312px; height: 738px; border: 2px dotted #444; border-top: 0; padding: 0 12px 0 10px; }
.banner { height: 66px; width: 1285px; background: #f3d5e9; display: flex; justify-content: center; padding-top: 15px; }
.banner h1 { font-size: 29.200px; line-height: 40px; letter-spacing: -.15px; color: #000; text-decoration: underline; text-decoration-thickness: 2px; text-underline-offset: 3px; white-space: nowrap; }
.cards { display: grid; grid-template-columns: 653px 617.500px; grid-template-rows: 305px 313px; column-gap: 14.500px; row-gap: 30px; margin-top: 10px; }
.card { border: 1.500px solid #444; background: #fff; box-shadow: 5px 6px 10px 2px rgba(0,0,0,.3); display: grid; grid-template-rows: 24px 1fr; font-size: 11.800px; color: #1c1c1c; position: relative; }
.card h2 { font: 400 17.500px/21px Roboto, sans-serif; text-align: center; text-decoration: underline; text-underline-offset: 2px; color: #333; padding-right: 1px; }
.plot { display: flex; padding-left: 1px; }
.axis { width: 36px; margin-right: 9.500px; display: flex; flex-direction: column; margin-top: -15px; text-align: right; letter-spacing: -.2px; }
.axis span { height: 60.800px; line-height: 60.800px; }
.bars { padding-top: 21px; }
.bars div { height: 12.180px; display: flex; align-items: center; line-height: 12px; letter-spacing: -.2px; }
.bars i { height: 10.400px; background: #e6b5b9; margin-right: 8px; flex: none; }
.rows { display: flex; flex-direction: column; }
.rows div { display: flex; align-items: center; white-space: nowrap; letter-spacing: -.1px; }
.rows b { font-weight: 400; text-align: right; margin-right: 9px; flex: none; }
.rows i { flex: none; margin-right: 8px; }
.rows em { letter-spacing: -.2px; }
.season .rows { padding-top: 29px; }
.season .rows div { height: 73.600px; }
.season b { width: 41.500px; }
.season i { height: 56px; background: #eab5da; }
.crops .rows { padding-top: 14.500px; }
.crops .rows div { height: 21.640px; }
.crops b { width: 69px; }
.crops i { height: 16.800px; background: #82b8fa; }
.location .rows { padding-top: 15.500px; }
.location .rows div { height: 23.500px; }
.location b { width: 94.500px; }
.location i { height: 18.600px; background: #ece09f; }
.scroll { position: absolute; right: 4px; top: 33px; width: 8px; height: 272px; background: #f3f2f1; }
.scroll div { height: 251px; background: #c1c1c1; }
.filters { width: 41px; border-left: 1px solid #a19f9d; display: flex; flex-direction: column; align-items: center; padding-top: 16px; }
.flip { transform: scaleX(-1); }
.funnel { margin-top: 18px; margin-left: 7px; }
.filters span { writing-mode: vertical-rl; font-weight: 600; font-size: 17.300px; margin-top: 11px; line-height: 20px; letter-spacing: .1px; }

.tabs { height: 44px; display: flex; }
.views { width: 159px; display: flex; padding-left: 13px; }
.dev { width: 30px; height: 38px; padding: 9px 0 0 2px; border-bottom: 3px solid #377765; }
.phone { margin: 5px 0 0 31px; }
.pl { margin: 16px 0 0 27px; }
.pr { margin: 16px 0 0 22px; }
.tab { background: #fff; border-left: 1px solid #c8c6c4; display: flex; align-items: center; justify-content: center; font-size: 14.200px; white-space: nowrap; position: relative; letter-spacing: -.1px; }
.tab.on { border-bottom: 5px solid #377765; font-weight: 600; padding-top: 5px; letter-spacing: -.2px; }
.tab small { position: absolute; right: 6px; top: 1px; font-size: 13px; }
.add { width: 50px; background: #377765; display: flex; align-items: center; justify-content: center; padding-bottom: 3px; }

/* visualizations pane */
.viz { width: 227px; border-left: 1px solid #dad9d7; border-right: 1px solid #dad9d7; flex: none; display: flex; flex-direction: column; }
.viz header, .data header { display: flex; justify-content: space-between; align-items: center; height: 49px; padding: 0 9px 0 10px; }
h3 { font-size: 18.300px; font-weight: 600; letter-spacing: 0; }
.viz h4 { font-size: 14.200px; font-weight: 600; line-height: 20px; height: 20px; margin-top: -1px; margin-bottom: 1px; padding-left: 10px; color: #333; letter-spacing: -.1px; }
.modes { display: flex; padding: 3px 0 0 10px; gap: 47px; }
.mode { width: 40px; height: 40px; }
.mode.on { background: #d0cecc; border-radius: 2px; }
.mode.fmt { padding: 4px 0 0 0; }
.notch { margin-top: 6px; }
.vgrid { display: grid; grid-template-columns: repeat(6, 35px); grid-auto-rows: 35px; padding: 13px 0 0 14px; }
.vgrid svg { width: 23px; height: 23px; }
.ax { fill: none; stroke: #333; stroke-width: 1.600; }
.ln { fill: none; stroke: #333; stroke-width: 1.500; }
.lb { fill: none; stroke: #3b7fc4; stroke-width: 1.600; }
.bl { fill: #8bbcea; stroke: #2c6cb8; stroke-width: 1.400; }
.gy { fill: #c8c6c4; stroke: #8a8886; stroke-width: 1.300; }
.wh { fill: #fff; stroke: #444; stroke-width: 1.500; }
.or { fill: #d8772c; stroke: #c0641e; stroke-width: .8; }
.fl { fill: #fbd58b; stroke: #d8772c; stroke-width: 1.200; }
.num { font-size: 10px; fill: #3b7fc4; }
.let { font-size: 18px; font-weight: 600; fill: #3b7fc4; letter-spacing: 0; }
.dots { display: flex; gap: 6px; padding: 8px 0 0 17px; height: 34px; }
.dots i { width: 2px; height: 2px; background: #222; }
.wells { border-top: 1px solid #dad9d7; padding: 12px 7px 0 5px; display: flex; flex-direction: column; font-size: 14.300px; white-space: nowrap; }
.wells label { line-height: 18px; margin-bottom: 2px; padding-left: 10px; letter-spacing: -.1px; }
.well { margin-top: 5px; height: 35px; border: 1px dashed #c8c6c4; border-radius: 2px; background: #fff; line-height: 34px; padding-left: 12px; }
.wells h5 { font-size: 14.200px; font-weight: 600; color: #484644; line-height: 20px; margin-top: 14px; padding-left: 10px; }
.opt { display: flex; justify-content: space-between; align-items: center; padding: 0 20px 0 10px; height: 34px; }
.o1 { margin-top: 4px; }
.opt > span { margin-top: -1px; }
.tog { width: 40px; height: 20px; border-radius: 10px; display: flex; align-items: center; font-size: 11px; }
.tog i { width: 10px; height: 10px; border-radius: 50%; }
.tog.off { border: 1px solid #7a7876; background: #fff; padding-left: 5px; gap: 2px; color: #605e5c; }
.tog.off i { background: #605e5c; }
.tog.onn { background: #377765; color: #fff; padding-left: 6px; gap: 3px; }
.tog.onn i { background: #fff; }
.well.w2 { margin-top: 6px; height: 32px; line-height: 31px; padding-left: 10px; letter-spacing: .05px; }

/* data pane */
.data { width: 225px; flex: none; }
.data header { padding: 0 9px 0 10px; height: 49px; }
.dsearch { margin: 8px 5px 0 5px; height: 30px; background: #fff; border: 1px solid #d1d1d1; border-bottom: 1.500px solid #605e5c; border-radius: 4px; display: flex; align-items: center; padding-left: 14px; gap: 10px; font-size: 15.800px; color: #6b6966; }
.dsearch span { padding-top: 2px; }
.table { display: flex; align-items: center; height: 30px; margin-top: 11px; padding-left: 16px; font-size: 14.200px; color: #333; }
.ti { margin: 0 7px 0 5px; }
.table span { letter-spacing: -.1px; }
.data ul { list-style: none; }
.data li { height: 30px; display: flex; align-items: center; padding-left: 55px; font-size: 14.200px; color: #333; letter-spacing: -.15px; white-space: nowrap; }
.data li i { width: 15px; height: 15px; border: 1px solid #7a7876; border-radius: 2px; margin-right: 11px; }
.data li svg { width: 14px; height: 16px; margin-right: 7px; }

/* status bar */
.status { height: 30px; background: #f3f2f1; border-top: 1px solid #d8d6d4; border-bottom: 2px solid #000; display: flex; align-items: center; flex: none; color: #484644; white-space: nowrap; font-size: 14.300px; }
.pg { margin-left: 5px; width: 1408px; padding-top: 3px; letter-spacing: 0; }
.pct { margin-left: 15px; width: 30px; letter-spacing: -.3px; }
.fit { margin-left: 23px; }
.upd { margin-left: 17px; padding-top: 4px; letter-spacing: .02px; }

/* taskbar */
.taskbar { height: 60px; position: relative; display: flex; background: linear-gradient(90deg, #cfdfea 0, #d5e2dc 100px, #e6e3bd 180px, #eadcd0 250px, #ecdad6 330px, #f1dfd0 520px, #f0dccf 800px, #ecdacf 980px, #e9e0b9 1100px, #dedcd0 1180px, #e8e5a2 1300px, #ebdec0 1420px, #ecdcd4 1490px, #f7e5d2 1590px, #ecdfb9 1780px, #efe0cc 1920px); font-size: 14.200px; white-space: nowrap; }
.widget { width: 475px; flex: none; display: flex; padding: 7px 0 0 24px; color: #1a1a1a; }
.widget div { margin-left: 5px; margin-top: 2px; display: flex; flex-direction: column; line-height: 20.500px; letter-spacing: -.05px; }
.sub { color: #4a4a4a; letter-spacing: .1px; }
.badge { font-size: 13px; fill: #fff; }
.apps { display: flex; align-items: center; flex: none; }
.start { margin-right: 17px; }
.tsearch { width: 274px; height: 40px; border-radius: 20px; background: #faf4ef; border: 1px solid #dfd2c9; display: flex; align-items: center; padding-left: 14px; gap: 13px; font-size: 15.800px; color: #5c5a58; margin-right: 3px; }
.app-i { width: 55px; height: 60px; display: flex; align-items: center; justify-content: center; position: relative; }
.run::after { content: ""; position: absolute; bottom: 6px; width: 8px; height: 4px; border-radius: 2px; background: #85817a; }
.active { width: 48px; height: 48px; margin-left: 4px; border-radius: 5px; background: #f7f0e9; }
.active::after { content: ""; position: absolute; bottom: 0; width: 20px; height: 4px; border-radius: 2px; background: #0f78d4; }
.tray { margin-left: auto; display: flex; align-items: center; width: 301px; flex: none; }
.t2 { margin-left: 22px; }
.t3 { margin-left: 19px; }
.t4 { margin-left: 9px; }
.t5 { margin-left: 9px; }
.clock { width: 89px; display: flex; flex-direction: column; text-align: right; line-height: 20.500px; color: #1a1a1a; margin-top: -1px; letter-spacing: .1px; }
.t6 { margin-left: 10px; }
```
